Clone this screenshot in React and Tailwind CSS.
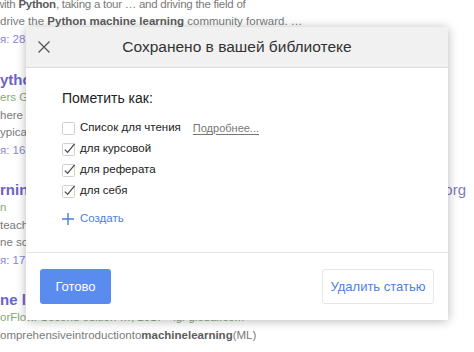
import React from "react";

const Box = ({ checked }) => (
  <svg width="14" height="14" viewBox="0 0 14 14" className="shrink-0">
    <rect x="0.5" y="1.5" width="12" height="12" rx="1" fill="#fff" stroke="#d0d0d0" />
    {checked && (
      <path d="M2.8 7.6 L5.6 10.4 L12.6 1.8" fill="none" stroke="#4a4a4a" strokeWidth="1.3" />
    )}
  </svg>
);

const Snippet = ({ children, className = "" }) => (
  <div className={`h-[17.5px] leading-[17.5px] text-[11.5px] text-[#7a7a7a] whitespace-nowrap ${className}`}>
    {children}
  </div>
);

const Title = ({ children, right }) => (
  <div className="flex h-[18px] items-center justify-between whitespace-nowrap pr-[8px] text-[15px] font-bold leading-[18px] text-[#6c62c9]">
    <span>{children}</span>
    {right && <span className="font-normal text-[#7d78cf]">{right}</span>}
  </div>
);

const Cited = ({ children }) => (
  <Snippet className="text-[#8a86d2]">{children}</Snippet>
);

const Green = ({ children }) => (
  <Snippet className="text-[#86a879]">{children}</Snippet>
);

export default function App() {
  const lists = [
    { label: "для курсовой", checked: true },
    { label: "для реферата", checked: true },
    { label: "для себя", checked: true },
  ];

  return (
    <div className="relative h-[352px] w-[474px] overflow-hidden bg-white font-['Liberation_Sans',Arial,sans-serif]">
      {/* Results behind the dialog */}
      <div className="-mt-[4.5px] flex flex-col">
        <div className="mb-[23px]">
          <Snippet className="-ml-[4px] tracking-[-0.25px]">
            with <b className="text-[#5c5c5c]">Python</b>, taking a tour … and driving the field of
          </Snippet>
          <Snippet>
            drive the <b className="text-[#5c5c5c]">Python machine learning</b> community forward. …
          </Snippet>
          <Cited>я: 28 Похожие статьи</Cited>
        </div>

        <div className="mb-[22px]">
          <Title>ython Machine Learning</Title>
          <Green>ers Group, 2017</Green>
          <Snippet>here are the steps to follow</Snippet>
          <Snippet>ypical machine learning task</Snippet>
          <Cited>я: 16 Похожие статьи</Cited>
        </div>

        <div className="mb-[22px]">
          <Title right="arxiv.org">rning with Python</Title>
          <Green>n</Green>
          <Snippet>teaches the basics of</Snippet>
          <Snippet>ne scikit-learn library</Snippet>
          <Cited>я: 17 Похожие статьи</Cited>
        </div>

        <div>
          <Title>ne learning with Python</Title>
          <Green>orFlow. Second edition …, 2017 - igi-global.com</Green>
          <Snippet>
            omprehensiveintroductionto<b className="text-[#5c5c5c]">machinelearning</b>(ML)
          </Snippet>
        </div>
      </div>

      {/* Dialog */}
      <div className="absolute left-[26px] top-[27px] flex h-[293px] w-[422px] flex-col bg-white shadow-[0_1px_10px_rgba(0,0,0,0.28)]">
        <div className="flex h-[41px] shrink-0 items-center border-b border-[#dedede] bg-[#f1f1f1] px-[12px]">
          <svg width="12" height="12" viewBox="0 0 12 12" className="shrink-0">
            <path d="M0.5 0.5 L11.5 11.5 M11.5 0.5 L0.5 11.5" stroke="#555" strokeWidth="1.3" />
          </svg>
          <div className="flex-1 text-center text-[15.5px] text-[#333]">Сохранено в вашей библиотеке</div>
          <div className="w-[12px] shrink-0" />
        </div>

        <div className="flex h-[185px] shrink-0 flex-col border-b border-[#e2e2e2] pl-[36px] pt-[20px]">
          <div className="h-[20px] text-[14px] leading-[20px] text-[#222]">Пометить как:</div>
          <div className="mt-[9.5px] flex flex-col">
            <div className="flex h-[21px] items-center gap-[4px] text-[11.5px] text-[#222]">
              <Box />
              <span>Список для чтения</span>
              <span className="ml-[8px] text-[11px] text-[#777] underline underline-offset-2">Подробнее...</span>
            </div>
            {lists.map((l) => (
              <div key={l.label} className="flex h-[21px] items-center gap-[4px] text-[11.5px] text-[#222]">
                <Box checked={l.checked} />
                <span>{l.label}</span>
              </div>
            ))}
          </div>
          <div className="mt-[7px] flex h-[21px] items-center gap-[6px] text-[11.5px] text-[#4b7fe3]">
            <svg width="12" height="12" viewBox="0 0 12 12" className="shrink-0">
              <path d="M6 0 V12 M0 6 H12" stroke="#4b7fe3" strokeWidth="1.4" />
            </svg>
            <span>Создать</span>
          </div>
        </div>

        <div className="flex flex-1 items-start justify-between px-[14px] pt-[16px]">
          <button className="h-[35px] w-[71px] rounded-[3px] bg-[#5a8cef] text-[13px] text-white">Готово</button>
          <button className="h-[35px] w-[112px] rounded-[3px] border border-[#e6e6e6] bg-white text-[13px] text-[#4b7fe3]">
            Удалить статью
          </button>
        </div>
      </div>
    </div>
  );
}
